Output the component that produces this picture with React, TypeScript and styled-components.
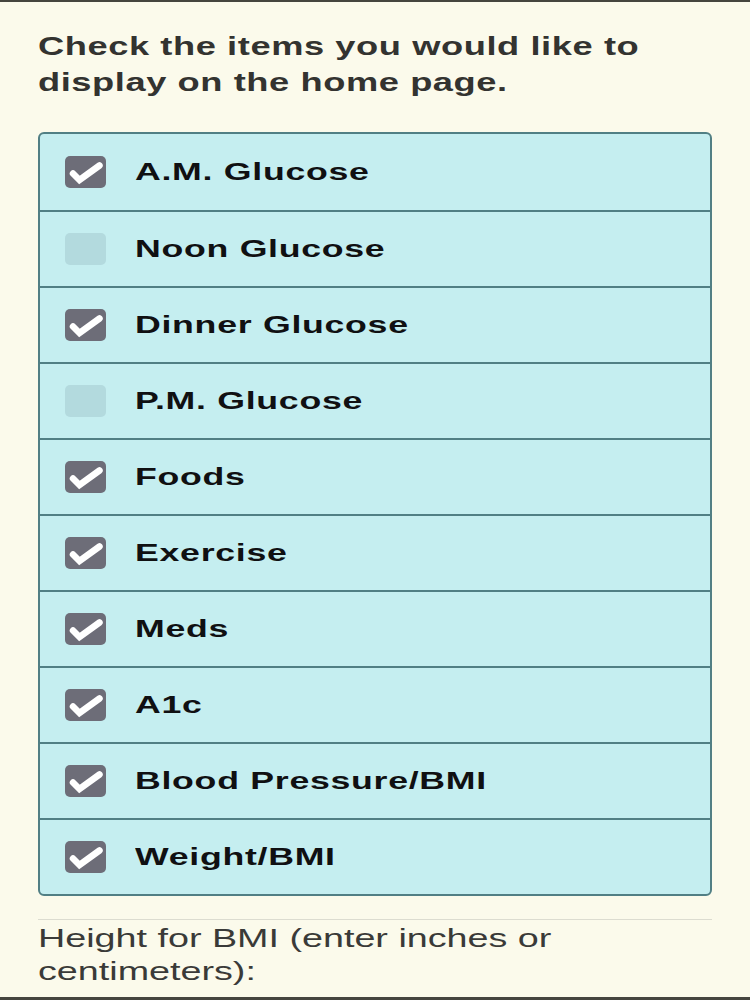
import styled, { createGlobalStyle } from "styled-components";

const GlobalStyle = createGlobalStyle`
  html, body {
    margin: 0;
    padding: 0;
    background: #fbfaeb;
  }
  body {
    font-family: "Liberation Sans", Arial, sans-serif;
  }
`;

// the whole screen is stretched sideways, so text gets the same stretch
const STRETCH = 1.45;

const Page = styled.div`
  box-sizing: border-box;
  height: 1000px;
  border-top: 2px solid #45453e;
  border-bottom: 3px solid #45453e;
  padding: 26px 38px 0 38px;
  overflow: hidden;
`;

const Heading = styled.h1`
  margin: 0;
  width: ${674 / STRETCH}px;
  font-size: 25px;
  line-height: 36px;
  font-weight: 700;
  letter-spacing: 0.4px;
  color: #333330;
  transform: scaleX(${STRETCH});
  transform-origin: left top;
`;

const Panel = styled.div`
  margin-top: 32px;
  width: 674px;
  box-sizing: border-box;
  border: 2px solid #517f84;
  border-radius: 6px;
  background: #c5eef0;
  overflow: hidden;
`;

const Row = styled.label`
  display: flex;
  align-items: center;
  height: 76px;
  box-sizing: border-box;
  padding-left: 25px;
  gap: 29px;
  & + & {
    border-top: 2px solid #517f84;
  }
`;

const Box = styled.span<{ $checked: boolean }>`
  display: block;
  width: 41px;
  height: 32px;
  border-radius: 5px;
  background: ${(p) => (p.$checked ? "#6d6d78" : "#b3dade")};
  flex-shrink: 0;
  svg {
    display: block;
  }
`;

const Label = styled.span`
  font-size: 24.6px;
  font-weight: 700;
  color: #101012;
  letter-spacing: 0.5px;
  white-space: nowrap;
  transform: scaleX(${STRETCH});
  transform-origin: left center;
`;

const Divider = styled.hr`
  margin: 23px 0 0 0;
  width: 674px;
  border: none;
  border-top: 1px solid #dcdcd0;
`;

const Note = styled.p`
  margin: 2px 0 0 0;
  width: ${560 / STRETCH}px;
  font-size: 26px;
  line-height: 33px;
  color: #3a3a38;
  transform: scaleX(${STRETCH});
  transform-origin: left top;
`;

const Check = () => (
  <svg width="41" height="32" viewBox="0 0 41 32">
    <path
      d="M8 17.5 L14.5 24 L34.5 9.5"
      fill="none"
      stroke="#ffffff"
      strokeWidth="6.5"
      strokeLinecap="round"
      strokeLinejoin="miter"
    />
  </svg>
);

const items: [string, boolean][] = [
  ["A.M. Glucose", true],
  ["Noon Glucose", false],
  ["Dinner Glucose", true],
  ["P.M. Glucose", false],
  ["Foods", true],
  ["Exercise", true],
  ["Meds", true],
  ["A1c", true],
  ["Blood Pressure/BMI", true],
  ["Weight/BMI", true],
];

export default function App() {
  return (
    <>
      <GlobalStyle />
      <Page>
        <Heading>Check the items you would like to display on the home page.</Heading>
        <Panel>
          {items.map(([name, on]) => (
            <Row key={name}>
              <Box $checked={on}>{on && <Check />}</Box>
              <Label>{name}</Label>
            </Row>
          ))}
        </Panel>
        <Divider />
        <Note>Height for BMI (enter inches or centimeters):</Note>
      </Page>
    </>
  );
}
